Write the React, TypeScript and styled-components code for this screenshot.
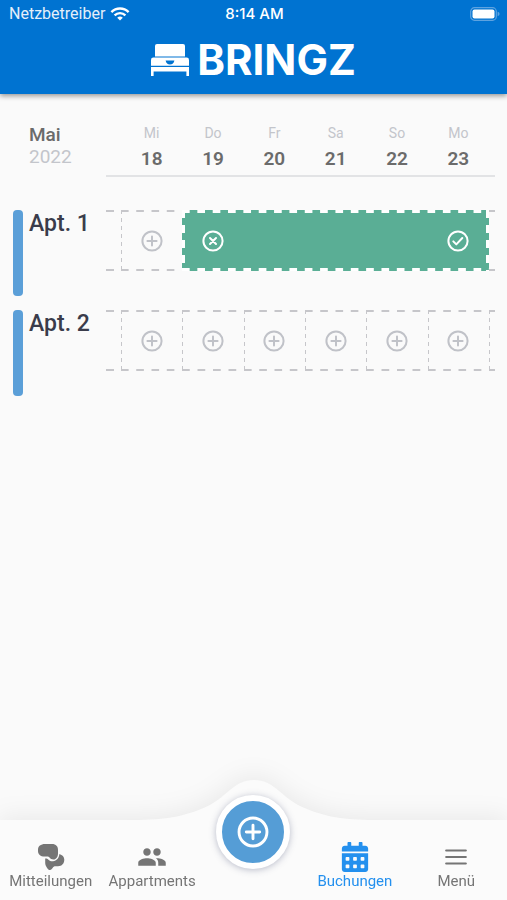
import React from 'react';
import styled, { createGlobalStyle } from 'styled-components';
import { MdPeople } from 'react-icons/md';
import { FaCalendarAlt } from 'react-icons/fa';

const Global = createGlobalStyle`
  *, *::before, *::after { box-sizing: border-box; }
  body { margin: 0; background: #fafafa; font-family: Rubik, Roboto, sans-serif; }
  button { font: inherit; border: 0; padding: 0; background: none; cursor: pointer; }
  svg { display: block; }
`;

const Page = styled.div`
  min-height: 100vh;
  display: flex;
  flex-direction: column;
`;

const Header = styled.header`
  background: #0073d1;
  color: #fff;
  box-shadow: 0 2px 5px rgba(0, 0, 0, 0.4);
`;

const StatusBar = styled.div`
  display: grid;
  grid-template-columns: 1fr auto 1fr;
  align-items: center;
  height: 28px;
  padding: 0 7px 0 9px;
  font: 400 15px/28px Roboto, sans-serif;
`;

const Carrier = styled.div`
  display: flex;
  align-items: center;
  gap: 5px;
  color: #e4effa;
  font-size: 16px;
`;

const Clock = styled.time`
  font: 500 15px/28px Inter, sans-serif;
`;

const BatterySlot = styled.div`
  justify-self: end;
`;

const Brand = styled.h1`
  margin: 0;
  display: flex;
  justify-content: center;
  align-items: center;
  gap: 8px;
  height: 66px;
  padding-bottom: 2px;
  font: 700 42px/64px Inter, sans-serif;
`;

const Main = styled.main`
  flex: 1;
  padding: 30px 12px 0 13px;
`;

const CalendarHead = styled.div`
  display: grid;
  grid-template-columns: 93px minmax(0, 1fr);
  margin-bottom: 33px;
`;

const Month = styled.div`
  padding-left: 16px;
  color: #6b6b6b;
  font: 500 19px/22px Roboto, sans-serif;
`;

const Year = styled.div`
  color: #c3c5cb;
  font-weight: 400;
`;

const Days = styled.div`
  display: grid;
  grid-template-columns: repeat(6, minmax(0, 1fr));
  height: 53px;
  padding: 0 6px 0 15px;
  border-bottom: 2px solid #e2e3e5;
`;

const Day = styled.div`
  display: flex;
  flex-direction: column;
  align-items: center;
  color: #c3c5cb;
  font: 400 14px/18px Roboto, sans-serif;
`;

const DayNumber = styled.strong`
  color: #6b6b6b;
  font-weight: 600;
  font-size: 19px;
  line-height: 33px;
`;

const Apartment = styled.section`
  display: grid;
  grid-template-columns: 10px 83px minmax(0, 1fr);
  height: 86px;
  margin-bottom: 14px;
`;

const Marker = styled.div`
  border-radius: 4px;
  background: #5b9fd8;
`;

const Name = styled.h2`
  margin: 0;
  padding-left: 6px;
  color: #3a3c4b;
  font: 500 23px/27px Roboto, sans-serif;
`;

const dashes = (color: string) => `linear-gradient(90deg, ${color} 8px, transparent 8px)`;
const uprights = (color: string, length: number) =>
  `linear-gradient(${color} ${length}px, transparent ${length}px)`;

const Track = styled.div`
  display: grid;
  grid-template-columns: 15px repeat(6, minmax(0, 1fr)) 6px;
  height: 61px;
`;

const Edge = styled.div`
  background:
    ${dashes('#c6c6ca')} 0 0 / 15px 2px repeat-x,
    ${dashes('#c6c6ca')} 0 100% / 15px 2px repeat-x;
`;

const EndEdge = styled(Edge)<{ $closed: boolean }>`
  background:
    ${dashes('#c6c6ca')} 0 0 / 15px 2px repeat-x,
    ${dashes('#c6c6ca')} 0 100% / 15px 2px repeat-x,
    ${p => uprights(p.$closed ? 'transparent' : '#c6c6ca', 4)} 0 0 / 1px 8px repeat-y;
`;

const Slot = styled.button`
  display: flex;
  align-items: center;
  justify-content: center;
  color: #c0c2c8;
  background:
    ${dashes('#c6c6ca')} 0 0 / 25% 2px repeat-x,
    ${dashes('#c6c6ca')} 0 100% / 25% 2px repeat-x,
    ${uprights('#c6c6ca', 4)} 0 0 / 1px 8px repeat-y;
`;

const Booking = styled.button<{ $nights: number }>`
  grid-column: span ${p => p.$nights};
  display: flex;
  align-items: center;
  justify-content: space-between;
  padding: 0 20px;
  color: #fff;
  background:
    ${dashes('#fff')} 0 0 / calc(100% / ${p => p.$nights * 4}) 3px repeat-x,
    ${dashes('#fff')} 0 100% / calc(100% / ${p => p.$nights * 4}) 3px repeat-x,
    ${uprights('#fff', 8)} 0 0 / 3px 15px repeat-y,
    ${uprights('#fff', 8)} 100% 0 / 3px 15px repeat-y,
    #5aae95;
`;

const NavBar = styled.nav`
  position: sticky;
  bottom: 0;
  background: #fbfbfb;
  filter: drop-shadow(0 -3px 12px rgba(0, 0, 0, 0.07));
`;

const Hump = styled.svg`
  position: absolute;
  top: -40px;
  left: 50%;
  transform: translateX(-50%);
`;

const Tabs = styled.div`
  position: relative;
  display: grid;
  grid-template-columns: repeat(5, minmax(0, 1fr));
  height: 80px;
`;

const Tab = styled.button<{ $active?: boolean }>`
  display: flex;
  flex-direction: column;
  align-items: center;
  padding-top: 22px;
  color: ${p => (p.$active ? '#2490ee' : '#757575')};
  font: 400 15px/18px Roboto, sans-serif;
`;

const TabIcon = styled.span`
  display: flex;
  align-items: center;
  justify-content: center;
  height: 30px;
`;

const AddButton = styled.button`
  justify-self: center;
  display: flex;
  align-items: center;
  justify-content: center;
  width: 74px;
  height: 74px;
  margin-top: -25px;
  border: 6px solid #fff;
  border-radius: 50%;
  background: #559dd6;
  color: #fff;
  box-shadow: 0 1px 7px rgba(60, 70, 110, 0.35);
`;

type Mark = 'plus' | 'cross' | 'check';

const marks: Record<Mark, string> = {
  plus: 'M11 6.4v9.2M6.400 11h9.200',
  cross: 'M8 8l6 6M14 8l-6 6',
  check: 'M6.3 11.4l3 3 6-6.4',
};

function CircleMark({ mark, size = 22 }: { mark: Mark; size?: number }) {
  return (
    <svg width={size} height={size} viewBox="0 0 22 22" fill="none" stroke="currentColor" strokeWidth="2" aria-hidden="true">
      <circle cx="11" cy="11" r="9.6" />
      <path d={marks[mark]} strokeLinecap="round" strokeLinejoin="round" />
    </svg>
  );
}

function BedLogo() {
  return (
    <svg width="38" height="32" viewBox="0 0 38 32" fill="#fff" aria-hidden="true">
      <path d="M6 0h26q2 0 2 2v10.6H4V2q0-2 2-2z" />
      <path fillRule="evenodd" d="M2.4 13.6h33.2q2.4 0 2.4 2.4v5.8H0V16q0-2.4 2.4-2.4zM14.6 16.4q.8 4 4.4 4t4.4-4z" />
      <path d="M0 23h38v9h-2.6v-4.4H2.6V32H0z" />
    </svg>
  );
}

function WifiIcon() {
  return (
    <svg width="20" height="14" viewBox="0 0 20 14" fill="none" stroke="#fff" strokeWidth="2.4" aria-hidden="true">
      <path d="M1.4 5.1a12.2 12.2 0 0 1 17.2 0M4.6 8.3a7.7 7.7 0 0 1 10.8 0" />
      <path d="M10 13.6L7.2 10.8a4 4 0 0 1 5.6 0z" fill="#fff" stroke="none" />
    </svg>
  );
}

function BatteryIcon() {
  return (
    <svg width="30" height="14" viewBox="0 0 30 14" aria-hidden="true">
      <rect x="0.7" y="0.7" width="25.6" height="12.6" rx="3.8" fill="none" stroke="#5ea3e0" strokeWidth="1.2" />
      <rect x="2.5" y="2.5" width="22" height="9" rx="2" fill="#fff" />
      <path d="M27.6 4.8q2 .6 2 2.2t-2 2.2z" fill="#5ea3e0" />
    </svg>
  );
}

function ChatIcon() {
  return (
    <svg width="30" height="30" viewBox="0 0 30 30" fill="currentColor" aria-hidden="true">
      <path d="M9 2h7c4 0 6 2.4 6 6v3.4c0 3.6-2 6-4.4 6-2.2 0-3-.6-3.8-1.6-.8-.9-1.4-1.3-3-1.3H8.5c-4 0-6.5-2-6.5-5.500V7.600C2 4.200 4.800 2 9 2z" />
      <path d="M9.200 16.600c1.500 0 2.600.4 3.500 1.300 1.100 1 2.500 1.500 4.300 1.300 3.600-.4 6-3 6.400-7.200 3 1 4.900 2.800 4.900 5.600 0 4-2.400 6.700-6.300 6.700h-2.600c-1.400 0-1.900.5-2.600 1.500-.8 1.200-1.600 2.200-2.800 2.200-1.500 0-2.300-1.300-3.200-2.600-1-1.400-1.600-2.600-1.600-4.600z" />
    </svg>
  );
}

function MenuIcon() {
  return (
    <svg width="22" height="16" viewBox="0 0 22 16" fill="none" stroke="currentColor" strokeWidth="2.2" strokeLinecap="round" aria-hidden="true">
      <path d="M1.200 1.500h19.600M1.200 8h19.600M1.200 14.500h19.600" />
    </svg>
  );
}

const days = [
  ['Mi', 18],
  ['Do', 19],
  ['Fr', 20],
  ['Sa', 21],
  ['So', 22],
  ['Mo', 23],
] as const;

const apartments = [
  { name: 'Apt. 1', free: [18], nights: 5 },
  { name: 'Apt. 2', free: [18, 19, 20, 21, 22, 23], nights: 0 },
];

export default function App() {
  return (
    <>
      <Global />
      <Page>
        <Header>
          <StatusBar>
            <Carrier>
              Netzbetreiber
              <WifiIcon />
            </Carrier>
            <Clock>8:14 AM</Clock>
            <BatterySlot>
              <BatteryIcon />
            </BatterySlot>
          </StatusBar>
          <Brand>
            <BedLogo />
            BRINGZ
          </Brand>
        </Header>

        <Main>
          <CalendarHead>
            <Month>
              Mai
              <Year>2022</Year>
            </Month>
            <Days>
              {days.map(([label, number]) => (
                <Day key={number}>
                  {label}
                  <DayNumber>{number}</DayNumber>
                </Day>
              ))}
            </Days>
          </CalendarHead>

          {apartments.map(({ name, free, nights }) => (
            <Apartment key={name}>
              <Marker />
              <Name>{name}</Name>
              <Track>
                <Edge />
                {free.map(day => (
                  <Slot key={day} aria-label={`${name}, ${day}. Mai`}>
                    <CircleMark mark="plus" />
                  </Slot>
                ))}
                {nights > 0 && (
                  <Booking $nights={nights} aria-label={`${name}, Buchung`}>
                    <CircleMark mark="cross" />
                    <CircleMark mark="check" />
                  </Booking>
                )}
                <EndEdge $closed={nights > 0} />
              </Track>
            </Apartment>
          ))}
        </Main>

        <NavBar>
          <Hump width="240" height="41" viewBox="0 0 240 41" fill="#fbfbfb" aria-hidden="true">
            <path d="M0 40C32 40 54 36 76 25C94 15 101 0 120 0S146 15 164 25C186 36 208 40 240 40V41H0z" />
          </Hump>
          <Tabs>
            <Tab>
              <TabIcon><ChatIcon /></TabIcon>
              Mitteilungen
            </Tab>
            <Tab>
              <TabIcon><MdPeople size={30} /></TabIcon>
              Appartments
            </Tab>
            <AddButton aria-label="Neue Buchung">
              <CircleMark mark="plus" size={32} />
            </AddButton>
            <Tab $active>
              <TabIcon><FaCalendarAlt size={30} /></TabIcon>
              Buchungen
            </Tab>
            <Tab>
              <TabIcon><MenuIcon /></TabIcon>
              Menü
            </Tab>
          </Tabs>
        </NavBar>
      </Page>
    </>
  );
}
